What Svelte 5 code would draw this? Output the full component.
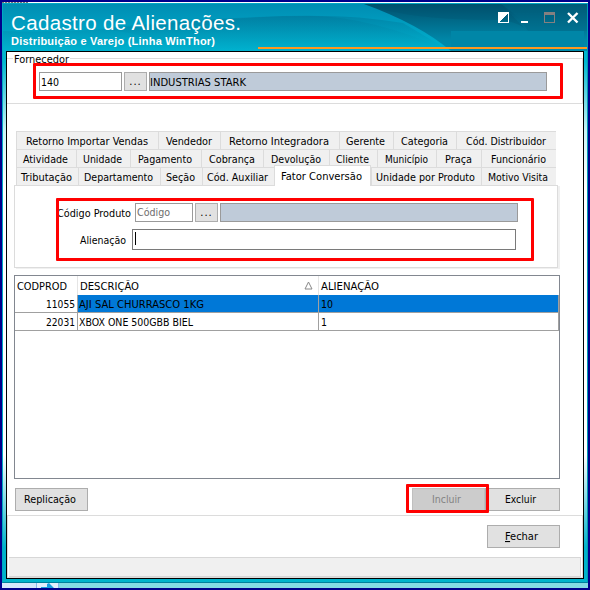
<script>
    const tabRows = [
        [
            {name: "Retorno Importar Vendas", width: 142, text: 122},
            {name: "Vendedor", width: 62, text: 46},
            {name: "Retorno Integradora", width: 119, text: 100},
            {name: "Gerente", width: 54, text: 39},
            {name: "Categoria", width: 63, text: 47},
            {name: "Cód. Distribuidor", width: 100, text: 80},
        ],
        [
            {name: "Atividade", width: 60, text: 45},
            {name: "Unidade", width: 54, text: 39},
            {name: "Pagamento", width: 71, text: 54},
            {name: "Cobrança", width: 62, text: 46},
            {name: "Devolução", width: 66, text: 50},
            {name: "Cliente", width: 48, text: 33},
            {name: "Município", width: 59, text: 43},
            {name: "Praça", width: 45, text: 27},
            {name: "Funcionário", width: 75, text: 55},
        ],
        [
            {name: "Tributação", width: 62, text: 51},
            {name: "Departamento", width: 82, text: 69},
            {name: "Seção", width: 42, text: 29},
            {name: "Cód. Auxiliar", width: 72, text: 61},
            {name: "Fator Conversão", width: 97, text: 81},
            {name: "Unidade por Produto", width: 110, text: 99},
            {name: "Motivo Visita", width: 75, text: 60},
        ],
    ];

    const products = [
        {code: 11055, codeText: 29, name: "AJI SAL CHURRASCO 1KG", nameText: 125, amount: 10, amountText: 12},
        {code: 22031, codeText: 29, name: "XBOX ONE 500GBB BIEL", nameText: 114, amount: 1, amountText: 6},
    ];

    let activeTab = $state("Fator Conversão");
    let selected = $state(11055);
</script>

{#snippet label(text, width)}
    <svg class="label" style="width: {width}px" height="15"><text x="0" y="12" textLength={width} lengthAdjust="spacingAndGlyphs">{text}</text></svg>
{/snippet}

<main>
    <div class="behind"></div>
    <div class="window">
        <header>
            <svg class="waves" width="584" height="47" viewBox="0 0 584 47">
                <defs>
                    <linearGradient id="sea" x1="0" y1="0" x2="0" y2="1">
                        <stop offset="0" stop-color="#008db3" />
                        <stop offset="1" stop-color="#00b2cf" />
                    </linearGradient>
                    <linearGradient id="deep" gradientUnits="userSpaceOnUse" x1="0" y1="8" x2="0" y2="47">
                        <stop offset="0" stop-color="#006f93" />
                        <stop offset="1" stop-color="#00b2cf" />
                    </linearGradient>
                    <linearGradient id="night" x1="0" y1="0" x2="0" y2="1">
                        <stop offset="0" stop-color="#00506d" />
                        <stop offset=".75" stop-color="#0086a7" />
                        <stop offset="1" stop-color="#008dad" />
                    </linearGradient>
                </defs>
                <rect width="584" height="47" fill="url(#sea)" />
                <path d="M0 27Q65 29 125 23T280 12Q350 10 400 19L447 47H0Z" fill="url(#deep)" opacity=".5" />
                <path d="M95 25Q210 12 310 12Q370 13 447 47H180Q150 30 95 25Z" fill="url(#deep)" opacity=".4" />
                <path d="M361 0Q416 20 448 47H584V0Z" fill="url(#night)" />
                <path d="M361 0Q410 17 498 16Q516 18 524 27L498 0Z" fill="#00506d" opacity=".25" />
                <path d="M498 0Q517 13 525 27H584V0Z" fill="#006888" opacity=".4" />
                <rect x="448" y="27" width="133" height="17" fill="#0086a7" />
            </svg>
            <div class="titles">
                <h1><svg width="232" height="25"><text x="0" y="20" textLength="230" lengthAdjust="spacing">Cadastro de Alienações.</text></svg></h1>
                <h2><svg width="206" height="15"><text x="0" y="10" textLength="204" lengthAdjust="spacing">Distribuição e Varejo (Linha WinThor)</text></svg></h2>
            </div>
            <svg class="controls" width="82" height="13" viewBox="0 0 82 13" shape-rendering="crispEdges">
                <path d="M.5 .5H10.5V10.5H.5Z" fill="none" stroke="#fff" />
                <path d="M0 0H11L0 11Z" fill="#fff" />
                <path d="M23 9H30V11H23Z" fill="#fff" />
                <path d="M46.5 .5H56.5V10.5H46.5Z" fill="none" stroke="#858080" />
                <path d="M46 0H57V3H46Z" fill="#858080" />
                <path d="M70 1L79.5 10.5M79.5 1L70 10.5" fill="none" stroke="#fff" stroke-width="2.4" shape-rendering="auto" />
            </svg>
            <div class="rule"></div>
        </header>

        <div class="body">
            <section class="supplier">
                <div class="legend">{@render label("Fornecedor", 55)}</div>
                <div class="fields">
                    <div class="field code">{@render label("140", 18)}</div>
                    <button class="more">...</button>
                    <div class="field readonly">{@render label("INDUSTRIAS STARK", 96)}</div>
                </div>
            </section>

            <nav>
                {#each tabRows as row}
                    <div class="tabs">
                        {#each row as tab}
                            <button
                                class="tab"
                                class:active={activeTab === tab.name}
                                style="width: {tab.width}px"
                                onclick={() => activeTab = tab.name}>
                                {@render label(tab.name, tab.text)}
                            </button>
                        {/each}
                    </div>
                {/each}
            </nav>

            <section class="panel">
                <div class="line">
                    <div class="caption">{@render label("Código Produto", 74)}</div>
                    <div class="field product">{@render label("Código", 33)}</div>
                    <button class="more">...</button>
                    <div class="field readonly"></div>
                </div>
                <div class="line second">
                    <div class="caption">{@render label("Alienação", 46)}</div>
                    <div class="field focused"><i class="caret"></i></div>
                </div>
            </section>

            <div class="grid">
                <div class="row head">
                    <div class="cell">{@render label("CODPROD", 50)}</div>
                    <div class="cell">
                        {@render label("DESCRIÇÃO", 59)}
                        <svg class="sort" width="9" height="9"><path d="M1 8L4.5 1L8 8Z" fill="none" stroke="#888" /></svg>
                    </div>
                    <div class="cell">{@render label("ALIENAÇÃO", 58)}</div>
                </div>
                {#each products as product (product.code)}
                    <!-- svelte-ignore a11y_click_events_have_key_events, a11y_no_static_element_interactions -->
                    <div class="row" class:selected={selected === product.code} onclick={() => selected = product.code}>
                        <div class="cell">{@render label(product.code, product.codeText)}</div>
                        <div class="cell">{@render label(product.name, product.nameText)}</div>
                        <div class="cell">{@render label(product.amount, product.amountText)}</div>
                    </div>
                {/each}
            </div>

            <div class="actions">
                <button class="push replicate">{@render label("Replicação", 52)}</button>
                <button class="push" disabled>{@render label("Incluir", 29)}</button>
                <button class="push wide">{@render label("Excluir", 31)}</button>
            </div>

            <footer>
                <button class="push close"><svg class="label" width="33" height="15"><text x="0" y="12" textLength="33" lengthAdjust="spacingAndGlyphs"><tspan text-decoration="underline">F</tspan>echar</text></svg></button>
                <div class="status"></div>
            </footer>
        </div>
    </div>

    <div class="desktop">
        <div class="shortcut">
            <svg width="16" height="5"><path d="M1 4H7V1L9 0L14 5H1Z" fill="#1c9fe0" /></svg>
        </div>
    </div>

    <div class="mark supplier-mark"></div>
    <div class="mark product-mark"></div>
    <div class="mark include-mark"></div>
</main>

<style>
    main {
        position: relative;
        box-sizing: border-box;
        width: 590px;
        height: 590px;
        overflow: hidden;
        border: 2px solid #00008b;
        background: #fff;
        font: 11px "DejaVu Sans Condensed", "DejaVu Sans", sans-serif;
    }

    main * {
        box-sizing: border-box;
    }

    button {
        display: flex;
        align-items: center;
        justify-content: center;
        padding: 0;
        font: inherit;
        color: #000;
        border: 1px solid #adadad;
        border-radius: 0;
        background: #e1e1e1;
    }

    .label {
        display: block;
        flex: none;
        overflow: visible;
        fill: currentColor;
    }

    /* sliver of the window underneath, cut off by the title bar */
    .behind {
        width: 26px;
        height: 1px;
        background: repeating-linear-gradient(90deg, #777 0 2px, #ddd 2px 3px);
    }

    .window {
        display: flex;
        flex-direction: column;
        height: 580px;
        border: 1px solid #007f9b;
        border-color: #00a9c5 #009bb5 #007f9b #00a9c5;
        background: linear-gradient(#00a9c5 0, #00b7cf 10%, #c9f4f7 22%, #fff 32%, #fff 78%, #00b3cb 94%);
    }

    header {
        position: relative;
        height: 47px;
        flex: none;
    }

    .waves {
        position: absolute;
        top: 0;
        left: 0;
    }

    .titles {
        position: relative;
        padding: 6px 0 0 8px;
    }

    h1, h2 {
        margin: 0;
    }

    h1 svg, h2 svg {
        display: block;
        fill: #fff;
    }

    h1 {
        font: 20.5px "Liberation Sans", Arial, sans-serif;
    }

    h2 {
        font: bold 11px "Liberation Sans", Arial, sans-serif;
    }

    .controls {
        position: absolute;
        top: 8px;
        right: 7px;
    }

    .rule {
        position: absolute;
        right: 0;
        top: 43px;
        width: 329px;
        height: 2px;
        background: #ff981f;
    }

    .body {
        display: flex;
        flex-direction: column;
        width: 578px;
        height: 528px;
        margin-left: 3px;
        border: 1px solid #000;
        background: #fff;
    }

    .supplier {
        height: 46px;
        margin-top: 6px;
        flex: none;
        border: 1px solid #dcdcdc;
        border-left: 0;
    }

    .legend {
        width: 57px;
        height: 13px;
        margin: -8px 0 0 6px;
        padding-left: 1px;
        background: linear-gradient(transparent 3px, #fff 3px);
    }

    .fields {
        display: flex;
        gap: 2px;
        padding: 8px 35px 0 32px;
    }

    .field {
        display: flex;
        height: 19px;
        padding: 1px 0 0 1px;
        border: 1px solid #9a9a9a;
        background: #fff;
    }

    .code {
        width: 83px;
    }

    .more {
        width: 23px;
        height: 19px;
        letter-spacing: 1px;
    }

    .readonly {
        flex: 1;
        padding-left: 0;
        background: #bfcbd9;
    }

    nav {
        width: 540px;
        margin: 27px 0 0 9px;
        border-right: 1px solid #dcdcdc;
    }

    .tabs {
        display: flex;
        height: 18px;
    }

    .tab {
        height: 18px;
        flex: none;
        border: solid #dcdcdc;
        border-width: 1px 0 0 1px;
        background: #f0f0f0;
    }

    .tab .label {
        margin-right: 2px;
    }

    .active {
        position: relative;
        height: 21px;
        margin-top: -2px;
        padding-bottom: 2px;
        border-right-width: 1px;
        background: #fff;
    }

    .panel {
        width: 544px;
        height: 83px;
        margin-left: 7px;
        padding: 17px 39px 0 41px;
        flex: none;
        border: 1px solid #dcdcdc;
        box-shadow: 2px 1px 0 #f0f0f0;
    }

    .line {
        display: flex;
        gap: 2px;
    }

    .caption {
        width: 77px;
        padding: 2px 0 0 1px;
    }

    .product {
        width: 58px;
        padding-top: 0;
        color: #6d6d6d;
    }

    .second {
        gap: 0;
        margin-top: 7px;
    }

    .second .caption {
        width: 76px;
        padding: 3px 0 0 24px;
    }

    .focused {
        width: 384px;
        height: 21px;
        padding: 2px;
        border-color: #7a7a7a;
    }

    .caret {
        width: 1px;
        height: 13px;
        background: #000;
    }

    .grid {
        width: 546px;
        height: 204px;
        margin: 7px 0 0 7px;
        flex: none;
        border: 1px solid #828790;
    }

    .row {
        display: grid;
        grid-template-columns: 63px 241px 240px;
        height: 18px;
    }

    .cell {
        display: flex;
        padding: 1px 0 0 1px;
        border-right: 1px solid #a0a0a0;
        border-bottom: 1px solid #a0a0a0;
    }

    .cell:last-child {
        padding-left: 2px;
    }

    .row:not(.head) .cell:first-child {
        justify-content: flex-end;
        padding-right: 2px;
    }

    .head {
        height: 19px;
    }

    .head .cell {
        padding: 2px 0 0 2px;
        border-bottom: 0;
        border-color: #e5e5e5;
    }

    .head .cell:last-child {
        border: 0;
    }

    .sort {
        margin: 3px 5px 0 auto;
    }

    .selected .cell:not(:first-child) {
        background: #0078d7;
    }

    .actions {
        display: flex;
        height: 36px;
        padding: 9px 23px 0 8px;
        flex: none;
    }

    .push {
        width: 73px;
        height: 23px;
        padding-bottom: 2px;
        flex: none;
    }

    .push .label {
        margin-right: 4px;
    }

    .replicate {
        margin-right: auto;
    }

    .push:disabled {
        color: #838383;
        border-color: #bfbfbf;
        background: #ccc;
    }

    .wide {
        width: 75px;
    }

    .wide .label {
        margin-right: 5px;
    }

    footer {
        flex: 1;
        border: 1px solid #dcdcdc;
    }

    .close {
        margin: 9px 22px 9px auto;
    }

    .status {
        height: 20px;
        margin: 0 1px;
        border: 1px solid #d7d7d7;
        border-left: 0;
        background: #f0f0f0;
    }

    .desktop {
        height: 5px;
        padding-left: 34px;
        background: linear-gradient(90deg, #d5e7fb 34px, #84dbe3 34px);
    }

    .shortcut {
        display: flex;
        width: 23px;
        height: 5px;
        padding-left: 3px;
        border: solid #8ab8ea;
        border-width: 0 1px;
        background: #e3effc;
    }

    .mark {
        position: absolute;
        border: 3px solid #f00;
        border-radius: 1px;
        pointer-events: none;
    }

    .supplier-mark {
        left: 31px;
        top: 61px;
        width: 530px;
        height: 36px;
    }

    .product-mark {
        left: 54px;
        top: 196px;
        width: 478px;
        height: 63px;
    }

    .include-mark {
        left: 404px;
        top: 482px;
        width: 83px;
        height: 29px;
    }
</style>
